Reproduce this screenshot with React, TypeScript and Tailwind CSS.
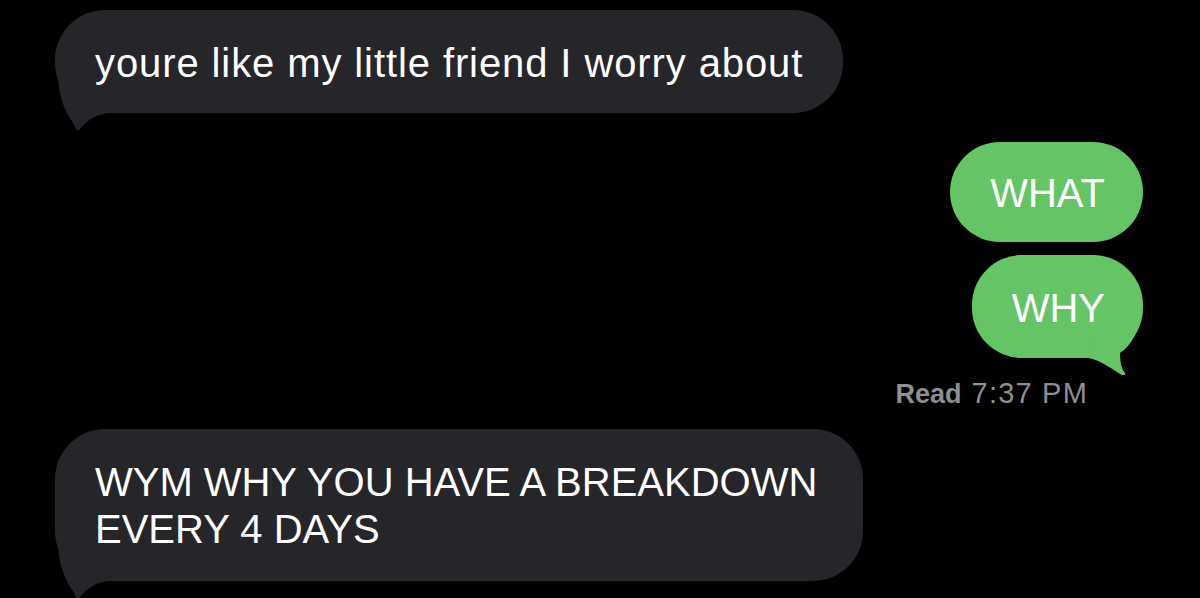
type Side = 'in' | 'out';

const GRAY = '#262529';
const GREEN = '#65c466';

// curled tail under the bottom-left corner of a received bubble
function InTail() {
  return (
    <svg
      className="absolute left-0 -bottom-[18px]"
      width="60"
      height="54"
      viewBox="0 0 60 54"
    >
      <path
        d="M3.5 3 C3.5 20 11 36 18 46 C20.5 51 21.5 54 24 53 C31 44 42 36 56 36 L56 3 Z"
        fill={GRAY}
      />
    </svg>
  );
}

// tail under the bottom-right corner of a sent bubble
function OutTail() {
  return (
    <svg
      className="absolute right-0 -bottom-[17px]"
      width="60"
      height="40"
      viewBox="0 0 60 40"
    >
      <path
        d="M10 0 L52 0 C48 8 43 14 37 18 C37 26 38 33 42 38 C43 40 41 41 39 40 C30 35 18 25 5 23 Z"
        fill={GREEN}
      />
    </svg>
  );
}

function Bubble({
  side,
  tail,
  pad,
  children,
}: {
  side: Side;
  tail?: boolean;
  pad: string;
  children: React.ReactNode;
}) {
  const color = side === 'in' ? 'bg-[#262529]' : 'bg-[#65c466]';
  return (
    <div className={`relative rounded-[50px] ${pad} ${color}`}>
      <p className="relative z-10 text-[40px] leading-[47px] text-white">{children}</p>
      {tail && (side === 'in' ? <InTail /> : <OutTail />)}
    </div>
  );
}

export default function App() {
  return (
    <div
      className="h-[598px] w-full overflow-hidden bg-black"
      style={{ fontFamily: '"Liberation Sans", Arial, sans-serif' }}
    >
      <div className="flex flex-col">
        <div className="ml-[55px] mt-[10px] flex tracking-[0.9px]">
          <Bubble side="in" tail pad="px-[40px] pt-[30px] pb-[26px]">
            youre like my little friend I worry about
          </Bubble>
        </div>

        <div className="mr-[57px] mt-[29px] flex flex-col items-end gap-[13px]">
          <Bubble side="out" pad="pl-[40px] pr-[38px] pt-[28px] pb-[25px]">
            WHAT
          </Bubble>
          <Bubble side="out" tail pad="pl-[40px] pr-[38px] pt-[30px] pb-[26px]">
            WHY
          </Bubble>
        </div>

        <div className="mr-[112px] mt-[18px] flex items-baseline justify-end leading-[34px] text-[#8e8e93]">
          <span className="text-[27px] font-bold">Read</span>
          <span className="ml-[10px] text-[29px] tracking-[1.2px]">7:37 PM</span>
        </div>

        <div className="ml-[55px] mt-[18px] flex">
          <Bubble side="in" tail pad="pl-[40px] pr-[46px] pt-[30px] pb-[28px]">
            WYM WHY YOU HAVE A BREAKDOWN
            <br />
            EVERY 4 DAYS
          </Bubble>
        </div>
      </div>
    </div>
  );
}
